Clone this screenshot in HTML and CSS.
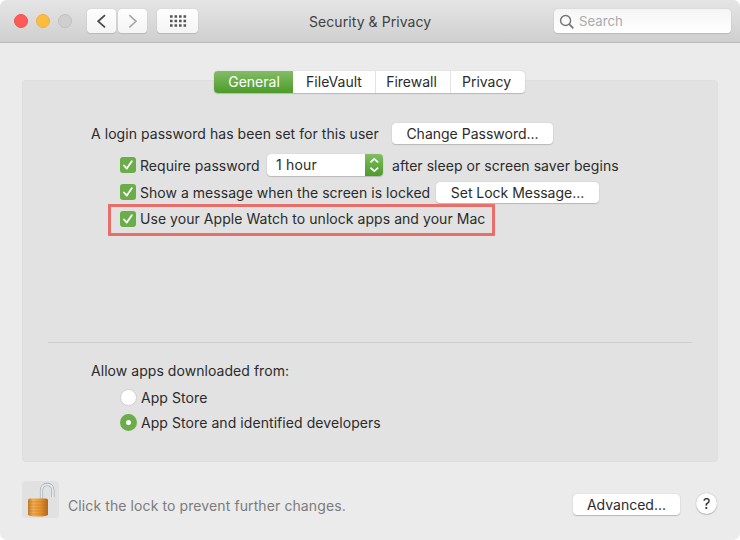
FILE: index.html
```html
<!DOCTYPE html>
<html lang="en">
<head>
<meta charset="utf-8">
<title>Security &amp; Privacy</title>
<link rel="stylesheet" href="styles.css">
</head>
<body>
<div class="window">

  <div class="toolbar">
    <div class="lights">
      <span class="light red"></span>
      <span class="light yellow"></span>
      <span class="light off"></span>
    </div>
    <div class="nav">
      <div class="navbtn"><svg width="29" height="24" viewBox="0 0 29 24"><path d="M18 6.2 L11.2 12.3 L18 18.4" fill="none" stroke="#484848" stroke-width="1.8"/></svg></div>
      <div class="navbtn"><svg width="29" height="24" viewBox="0 0 29 24"><path d="M11.3 6.2 L18 12.3 L11.3 18.4" fill="none" stroke="#a8a8a8" stroke-width="1.6"/></svg></div>
    </div>
    <div class="gridbtn">
      <svg width="18" height="12" viewBox="0 0 18 12"><path d="M1 1.5H18M1 6H18M1 10.5H18" stroke="#555" stroke-width="2.5" stroke-dasharray="2.6 1.9"/></svg>
    </div>
    <div class="title">Security &amp; Privacy</div>
    <div class="search">
      <svg width="16" height="16" viewBox="0 0 16 16"><circle cx="6.6" cy="6.5" r="5" fill="none" stroke="#747474" stroke-width="1.4"/><path d="M10.2 10.2 L14.3 14.3" stroke="#747474" stroke-width="1.7"/></svg>
      <span>Search</span>
    </div>
  </div>

  <div class="panel">
    <div class="tabs">
      <div class="tab selected">General</div>
      <div class="tab filevault">FileVault</div>
      <div class="tab firewall">Firewall</div>
      <div class="tab privacy">Privacy</div>
    </div>

    <div class="row login">
      <span class="label">A login password has been set for this user</span>
      <div class="button change">Change Password...</div>
    </div>
    <div class="row option require">
      <span class="check"><svg width="16" height="16" viewBox="0 0 16 16"><path d="M4 8.5 L6.8 11.6 L11.8 4.3" /></svg></span>
      <span class="label">Require password</span>
      <div class="select">
        <span class="value">1 hour</span>
        <span class="stepper"><svg width="18" height="22" viewBox="0 0 18 22"><path d="M5.4 8.4 L9.3 4.8 L13.2 8.4 M5.4 13.6 L9.3 17.2 L13.2 13.6"/></svg></span>
      </div>
      <span class="label after">after sleep or screen saver begins</span>
    </div>
    <div class="row option message">
      <span class="check"><svg width="16" height="16" viewBox="0 0 16 16"><path d="M4 8.5 L6.8 11.6 L11.8 4.3" /></svg></span>
      <span class="label">Show a message when the screen is locked</span>
      <div class="button lockmsg">Set Lock Message...</div>
    </div>
    <div class="row watch">
      <span class="check"><svg width="16" height="16" viewBox="0 0 16 16"><path d="M4 8.5 L6.8 11.6 L11.8 4.3" /></svg></span>
      <span class="label">Use your Apple Watch to unlock apps and your Mac</span>
    </div>

    <div class="divider"></div>

    <div class="row allow"><span class="label">Allow apps downloaded from:</span></div>
    <div class="row choice">
      <span class="radio"></span>
      <span class="label">App Store</span>
    </div>
    <div class="row choice">
      <span class="radio on"></span>
      <span class="label">App Store and identified developers</span>
    </div>
  </div>

  <div class="footer">
    <div class="lock">
      <svg width="37" height="37" viewBox="0 0 37 37">
        <defs>
          <linearGradient id="brass" x1="0" x2="1" y1="0" y2="0">
            <stop offset="0" stop-color="#c07a26"/>
            <stop offset=".25" stop-color="#f0ae58"/>
            <stop offset=".6" stop-color="#e8952e"/>
            <stop offset="1" stop-color="#b0681d"/>
          </linearGradient>
        </defs>
        <path d="M19.5 18 V9 C19.5 1.6 30.8 1.6 30.8 9 V16" fill="none" stroke="#98a3a7" stroke-width="3.2"/>
        <path d="M19.5 18 V9 C19.5 1.6 30.8 1.6 30.8 9 V16" fill="none" stroke="#e2e9ec" stroke-width="2"/>
        <path d="M6 19 Q6 17.5 8 17.5 H24 Q26 17.5 26 19 V33.5 Q25.5 35.5 16 35.5 Q6.5 35.5 6 33.5 Z" fill="url(#brass)"/>
        <path d="M6.5 21H25.5M6.5 24H25.5M6.5 27H25.5M6.5 30H25.5M6.5 33H25.5" stroke="#b66f20" stroke-width=".7" opacity=".5"/>
      </svg>
    </div>
    <div class="hint">Click the lock to prevent further changes.</div>
    <div class="button advanced">Advanced...</div>
    <div class="help">?</div>
  </div>

</div>
</body>
</html>
```

FILE: styles.css
```css
body {
	margin: 0;
	background: #fff;
	color: #2b2b2b;
	font-family: Inter, "Liberation Sans", sans-serif;
	font-size: 14px;
}
svg { display: block; }

.window {
	width: 740px; height: 540px;
	box-sizing: border-box;
	background: #ebebeb;
	border-radius: 7px;
	overflow: hidden;
}

/* title bar */
.toolbar {
	display: flex; align-items: center;
	height: 43px;
	box-sizing: border-box;
	padding: 0 9px 0 14px;
	background: linear-gradient(#e5e5e5, #cfcfcf);
	border-bottom: 1px solid #b9b9b9;
}
.lights { display: flex; gap: 8px; }
.light {
	width: 14px; height: 14px;
	box-sizing: border-box;
	border-radius: 50%;
}
.red { background: #fc5b57; border: 1px solid #ee504c; }
.yellow { background: #fdbc40; border: 1px solid #eeb03a; }
.off { background: #cfcfcf; border: 1px solid #bfbfbf; }
.nav { display: flex; gap: 2px; margin-left: 15px; }
.navbtn, .gridbtn, .search {
	height: 24px;
	background: linear-gradient(#fefefe, #f4f4f4);
	border-radius: 4px;
	box-shadow: 0 0 1px #aaa, 0 1px 1px #bbb;
}
.navbtn { width: 29px; }
.gridbtn {
	display: flex; align-items: center; justify-content: center;
	width: 41px; margin-left: 10px;
}
.title {
	margin-left: 111px;
	width: 123px;
	color: #414141;
	white-space: nowrap;
	letter-spacing: .07px;
}
.search {
	display: flex; align-items: center;
	width: 177px;
	margin-left: auto;
	color: #aaa;
	background: linear-gradient(#f5f5f5, #fff);
}
.search svg { margin: 1px 4px 0 5px; }
.search span { font-size: 13.2px; }

/* main panel */
.panel {
	width: 696px; height: 382px;
	box-sizing: border-box;
	margin: 37px 0 0 22px;
	border: 1px solid #dedede;
	border-radius: 4px;
	background: #e2e2e2;
}
.tabs {
	display: flex;
	width: 311px; height: 22px;
	margin: -10px 0 0 191px;
	background: #fff;
	border-radius: 4px;
	box-shadow: 0 0 1px #aaa, 0 1px 1px #bbb;
}
.tab {
	box-sizing: border-box;
	line-height: 22px;
	text-align: center;
	border-left: 1px solid #e2e2e2;
}
.selected {
	width: 79px;
	padding-left: 1px;
	border: 0;
	border-radius: 4px 0 0 4px;
	background: linear-gradient(#83bd65, #4b9b29);
	color: #fff;
}
.filevault { width: 82px; border: 0; }
.firewall { width: 75px; padding-right: 3px; }
.privacy { width: 75px; padding-right: 3px; }

.row {
	display: flex; align-items: center;
	box-sizing: border-box;
	white-space: nowrap;
}
.label { letter-spacing: .05px; }
.button {
	height: 21px;
	line-height: 21px;
	text-align: center;
	background: #fff;
	border-radius: 4px;
	box-shadow: 0 0 1px #aaa, 0 1px 1px #bbb;
	flex: none;
}
.check {
	width: 16px; height: 16px;
	margin-right: 4px;
	border-radius: 3px;
	background: #6bad4a;
	flex: none;
}
.check path { fill: none; stroke: #fff; stroke-width: 1.8; stroke-linecap: round; stroke-linejoin: round; }
.login { height: 32px; margin-top: 24px; padding-left: 68px; }
.login .label { width: 301px; }
.change { width: 161px; }
.option { padding-left: 97px; }
.require { height: 32px; }
.require .label { width: 127px; }
.select {
	display: flex; justify-content: space-between;
	width: 116px; height: 22px;
	line-height: 22px;
	background: #fff;
	border-radius: 4px;
	box-shadow: 0 0 1px #aaa, 0 1px 1px #bbb;
}
.value { padding-left: 9px; letter-spacing: .2px; }
.stepper {
	width: 18px;
	border-radius: 0 4px 4px 0;
	background: linear-gradient(#83bd65, #4b9b29);
}
.stepper path { fill: none; stroke: #fff; stroke-width: 1.6; }
.require .after { margin-left: 9px; width: auto; }
.message { height: 22px; }
.message .label { width: 296px; letter-spacing: .03px; }
.lockmsg { width: 163px; letter-spacing: -.03px; }
.watch {
	width: 387px; height: 32px;
	margin: 1px 0 0 85px;
	padding: 0 0 3px 8px;
	border: 3px solid #e96d69;
}
.watch .check { margin-left: 1px; }
.divider {
	height: 1px;
	margin: 106px 25px 0;
	background: #cdcdcd;
}
.allow { height: 28px; margin-top: 13px; padding-left: 68px; }
.choice { height: 25px; padding-left: 97px; }
.choice .label { letter-spacing: .07px; }
.allow + .choice { margin-top: 1px; }
.radio {
	width: 17px; height: 17px;
	box-sizing: border-box;
	margin-right: 4px;
	border: 1px solid #cfcfcf;
	border-radius: 50%;
	background: #fff;
}
.on { border: 6px solid #6bad4a; }

/* bottom bar */
.footer {
	display: flex; align-items: center;
	height: 37px;
	margin: 19px 23px 0 22px;
}
.lock {
	width: 37px; height: 37px;
	border-radius: 4px;
	background: #e1e1e1;
}
.hint { margin: 12px 0 0 9px; color: #7b7b7b; white-space: nowrap; letter-spacing: .1px; }
.advanced { width: 107px; margin: 9px 16px 0 auto; }
.help {
	width: 21px; height: 21px;
	margin-top: 8px;
	line-height: 21px;
	text-align: center;
	font-size: 15px;
	border-radius: 50%;
	background: #fff;
	box-shadow: 0 0 1px #999, 0 1px 1px #bbb;
}
```
